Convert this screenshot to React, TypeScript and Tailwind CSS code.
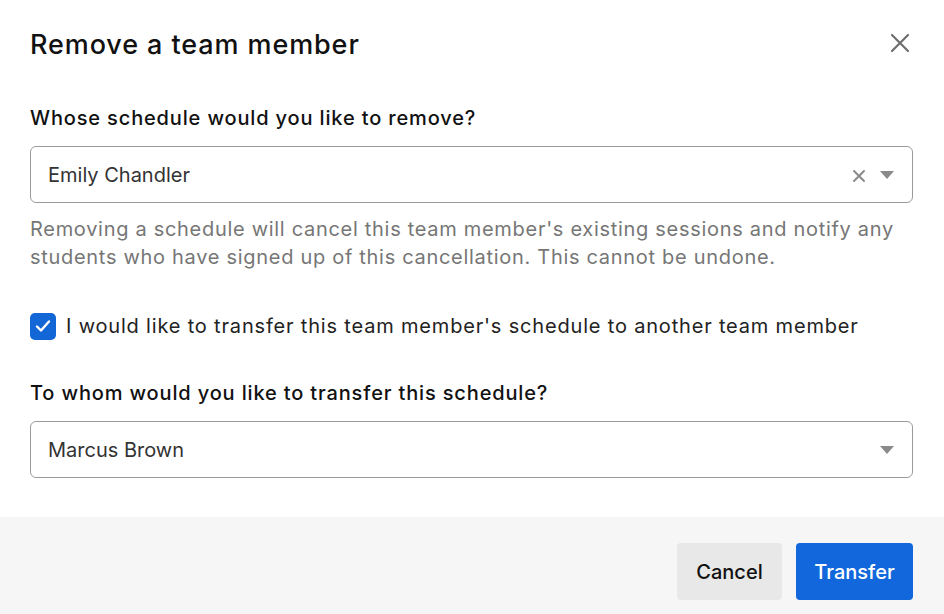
import React from 'react';

function Caret() {
  return (
    <svg width="14" height="8" viewBox="0 0 14 8" className="shrink-0">
      <path d="M0 0h14L7 8z" fill="#8a8a8a" />
    </svg>
  );
}

function SelectBox({ value, clearable }: { value: string; clearable?: boolean }) {
  return (
    <div className="flex items-center h-[57px] rounded-md border border-[#9a9a9a] pl-[17px] pr-[18px]">
      <span className="flex-1 text-[20px] text-[#333]">{value}</span>
      {clearable && (
        <svg width="14" height="14" viewBox="0 0 14 14" className="mr-[14px] mt-[2px]">
          <path d="M2 2l10 10M12 2L2 12" stroke="#8a8a8a" strokeWidth="2" strokeLinecap="round" />
        </svg>
      )}
      <Caret />
    </div>
  );
}

export default function App() {
  return (
    <div className="w-[944px] h-[614px] bg-white flex flex-col text-[#111]" style={{ fontFamily: 'Inter, "Liberation Sans", sans-serif' }}>
      <div className="flex-1 px-[30px] pr-[31px]">
        <div className="flex justify-between pt-[27px] h-[90px] items-start">
          <h1 className="text-[27px] font-medium tracking-[0.9px] leading-[36px]">Remove a team member</h1>
          <svg width="20" height="20" viewBox="0 0 20 20" className="mt-[6px] mr-[3px]">
            <path d="M2 2l16 16M18 2L2 18" stroke="#6e6e6e" strokeWidth="2.2" strokeLinecap="round" />
          </svg>
        </div>
        <div className="text-[20px] font-medium leading-[28px] tracking-[0.85px] mt-[14px] mb-[14px]">Whose schedule would you like to remove?</div>
        <SelectBox value="Emily Chandler" clearable />
        <p className="text-[20px] leading-[28px] tracking-[0.7px] text-[#767676] mt-[12px]">
          Removing a schedule will cancel this team member's existing sessions and notify any students who have signed up of this cancellation. This cannot be undone.
        </p>
        <label className="flex items-center gap-[10px] mt-[40px]">
          <span className="w-[26px] h-[27px] rounded-[5px] bg-[#1366d6] flex items-center justify-center">
            <svg width="16" height="14" viewBox="0 0 16 14">
              <path d="M2 7.5l4 4L14 2.5" stroke="#fff" strokeWidth="2.4" fill="none" strokeLinecap="round" strokeLinejoin="round" />
            </svg>
          </span>
          <span className="text-[20px] text-[#222] tracking-[0.82px]">I would like to transfer this team member's schedule to another team member</span>
        </label>
        <div className="text-[20px] font-medium leading-[28px] tracking-[0.85px] mt-[38px] mb-[14px]">To whom would you like to transfer this schedule?</div>
        <SelectBox value="Marcus Brown" />
      </div>
      <div className="h-[97px] bg-[#f6f6f6] flex items-start justify-end gap-[14px] pt-[26px] pr-[31px]">
        <button className="h-[57px] w-[105px] rounded-[4px] bg-[#e8e8e8] text-[20px] font-medium text-[#111]">Cancel</button>
        <button className="h-[57px] w-[117px] rounded-[4px] bg-[#1167db] text-[20px] font-medium text-white">Transfer</button>
      </div>
    </div>
  );
}
